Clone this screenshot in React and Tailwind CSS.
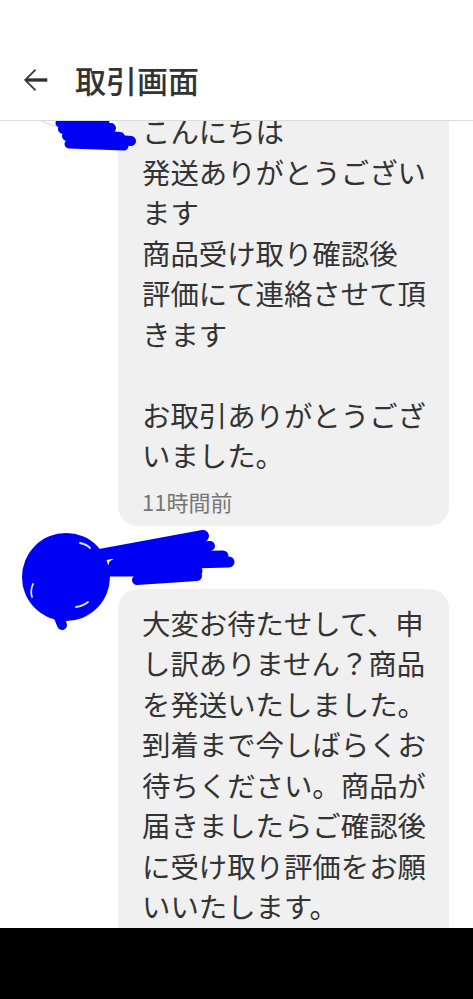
import React from "react";

const bubble1 = [
  "こんにちは",
  "発送ありがとうござい",
  "ます",
  "商品受け取り確認後",
  "評価にて連絡させて頂",
  "きます",
  "",
  "お取引ありがとうござ",
  "いました。",
];

const bubble2 = [
  "大変お待たせして、申",
  "し訳ありません？商品",
  "を発送いたしました。",
  "到着まで今しばらくお",
  "待ちください。商品が",
  "届きましたらご確認後",
  "に受け取り評価をお願",
  "いいたします。",
];

function Lines({ lines }) {
  return (
    <div className="text-[28.4px] leading-[40.5px] text-[#333333]">
      {lines.map((l, i) => (
        <div key={i} className="whitespace-nowrap h-[40.5px]">
          {l === "" ? "\u00a0" : l}
        </div>
      ))}
    </div>
  );
}

function Scribble1() {
  return (
    <svg
      className="absolute left-0 top-[-20px] pointer-events-none"
      width="260"
      height="150"
      viewBox="0 -20 260 150"
    >
      <circle cx="60" cy="75" r="2.5" fill="#7a5a3a" />
      <g stroke="#0000f5" strokeLinecap="round" fill="none">
        <line x1="60" y1="76" x2="105" y2="74" strokeWidth="9" />
        <line x1="63" y1="82" x2="111" y2="81" strokeWidth="10" />
        <line x1="67" y1="89" x2="131" y2="94" strokeWidth="10" />
        <line x1="69" y1="97" x2="124" y2="99" strokeWidth="9" />
        <line x1="75" y1="86" x2="120" y2="90" strokeWidth="10" />
      </g>
    </svg>
  );
}

function Scribble2() {
  return (
    <svg
      className="absolute left-0 top-[-20px] pointer-events-none"
      width="260"
      height="150"
      viewBox="0 -20 260 150"
    >
      <ellipse cx="66" cy="38" rx="44" ry="44" fill="#0000f5" />
      <g stroke="#0000f5" strokeLinecap="round" fill="none">
        <line x1="58" y1="76" x2="62" y2="86" strokeWidth="10" />
        <line x1="100" y1="16" x2="203" y2="-3" strokeWidth="12" />
        <line x1="143" y1="10" x2="210" y2="7" strokeWidth="10" />
        <line x1="118" y1="19" x2="223" y2="17" strokeWidth="11" />
        <line x1="114" y1="26" x2="229" y2="23" strokeWidth="11" />
        <line x1="108" y1="32" x2="197" y2="32" strokeWidth="11" />
        <line x1="137" y1="41" x2="197" y2="37" strokeWidth="10" />
      </g>
      <g stroke="#dfe2f2" strokeWidth="1.8" fill="none" strokeLinecap="round">
        <path d="M33 45 Q30 52 32 58" />
        <path d="M76 68 Q83 67 88 63" />
        <path d="M80 4 Q86 5 90 9" />
      </g>
    </svg>
  );
}

function Message({ lines, time, first, children }) {
  return (
    <div className={`relative flex ${first ? "mt-[-74px]" : "mt-[13px]"}`}>
      <div className="ml-[22px] w-[80px] h-[80px] rounded-full border border-[#cfcfcf] bg-white shrink-0" />
      <div className="ml-[16px] w-[331px] shrink-0">
        <div className="h-[50px]" />
        <div className="rounded-[20px] bg-[#f0f0f0] pl-[24px] pr-[10px] pt-[14px] pb-[10px]">
          <Lines lines={lines} />
          {time && (
            <div className="mt-[10px] text-[22px] leading-[30px] text-[#777777] whitespace-nowrap">
              {time}
            </div>
          )}
        </div>
      </div>
      {children}
    </div>
  );
}

export default function App() {
  return (
    <div className="w-[473px] h-[999px] flex flex-col bg-white overflow-hidden font-['Noto_Sans_CJK_JP','Noto_Sans',sans-serif]">
      <div className="h-[121px] shrink-0 border-b border-[#dcdcdc] bg-white">
        <div className="mt-[40px] h-[80px] flex items-center">
          <svg
            className="ml-[17px] shrink-0"
            width="36"
            height="36"
            viewBox="0 0 24 24"
          >
            <path
              d="M20 11.15H6.9l5.65-5.6L11.95 4.95 4.9 12l7.05 7.05.6-.6-5.65-5.6H20z"
              fill="#333333"
              stroke="#333333"
              strokeWidth="0.5"
            />
          </svg>
          <div className="ml-[22px] text-[31px] leading-[40px] font-medium text-[#333333] whitespace-nowrap">
            取引画面
          </div>
        </div>
      </div>
      <div className="flex-1 overflow-hidden relative">
        <Message lines={bubble1} time="11時間前" first>
          <Scribble1 />
        </Message>
        <Message lines={bubble2} time="11時間前">
          <Scribble2 />
        </Message>
      </div>
      <div className="h-[71px] shrink-0 bg-black" />
    </div>
  );
}
